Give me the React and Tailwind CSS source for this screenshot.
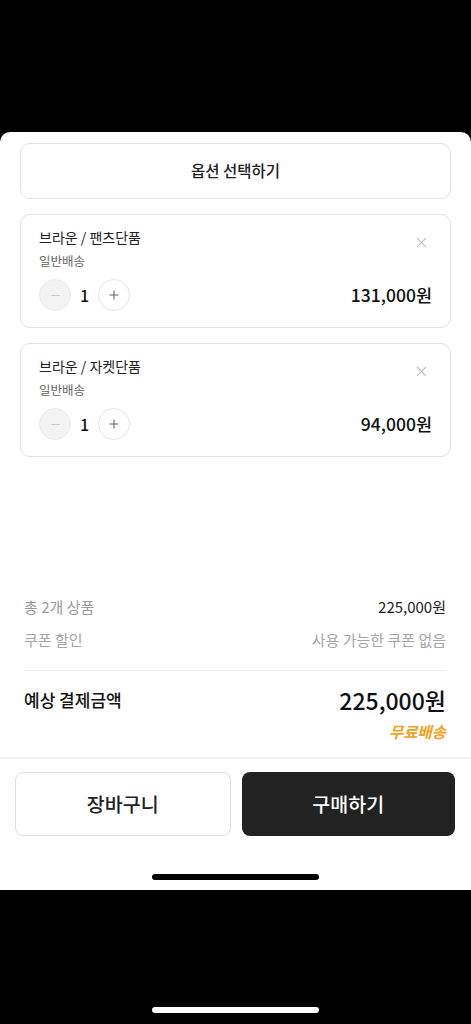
import { X, Minus, Plus } from "lucide-react";

const font = { fontFamily: '"Noto Sans CJK KR", "Noto Sans", sans-serif' };

function OptionCard({ name, price }) {
  return (
    <div className="relative h-[114px] rounded-[10px] border border-[#e2e2e2] bg-white pl-[18px] pr-[18px] pt-[12px]">
      <div className="text-[14px] leading-[20px] text-[#222]">{name}</div>
      <div className="mt-[5px] text-[12.5px] leading-[18px] text-[#666]">일반배송</div>
      <div className="mt-[9px] flex items-center justify-between">
        <div className="flex items-center">
          <div className="flex h-[32px] w-[32px] items-center justify-center rounded-full border border-[#ebebeb] bg-[#f3f3f3]">
            <Minus size={13} color="#c4c4c4" strokeWidth={1.6} />
          </div>
          <div className="w-[27px] text-center text-[16px] font-medium text-[#111]">1</div>
          <div className="flex h-[32px] w-[32px] items-center justify-center rounded-full border border-[#e6e6e6] bg-white">
            <Plus size={14} color="#555" strokeWidth={1.6} />
          </div>
        </div>
        <div className="text-[17.5px] font-medium text-[#111]">{price}</div>
      </div>
      <button className="absolute right-[20px] top-[19px]">
        <X size={17} color="#c4c4c4" strokeWidth={1.5} />
      </button>
    </div>
  );
}

export default function App() {
  return (
    <div className="flex h-[1024px] w-full flex-col bg-black" style={font}>
      <div className="h-[132px] shrink-0" />
      <div className="flex h-[758px] shrink-0 flex-col rounded-t-[10px] bg-white">
        <div className="flex flex-col gap-[15px] px-[20px] pt-[11px]">
          <button className="flex h-[56px] items-center justify-center rounded-[10px] border border-[#e2e2e2] bg-white text-[15.5px] font-medium text-[#222]">
            옵션 선택하기
          </button>
          <OptionCard name="브라운 / 팬츠단품" price="131,000원" />
          <OptionCard name="브라운 / 자켓단품" price="94,000원" />
        </div>
        <div className="flex-1" />
        <div className="pl-[24px] pr-[25px] pb-[16px]">
          <div className="flex items-center justify-between text-[15px] leading-[20px]">
            <span className="text-[#9a9a9a]">총 2개 상품</span>
            <span className="text-[#222]">225,000원</span>
          </div>
          <div className="mt-[13px] flex items-center justify-between text-[15px] leading-[20px]">
            <span className="text-[#a5a5a5]">쿠폰 할인</span>
            <span className="text-[#a5a5a5]">사용 가능한 쿠폰 없음</span>
          </div>
          <div className="mt-[20px] h-px bg-[#ececec]" />
          <div className="mt-[14px] flex items-center justify-between leading-[30px]">
            <span className="text-[17px] font-medium text-[#111]">예상 결제금액</span>
            <span className="text-[23px] font-medium text-[#111]">225,000원</span>
          </div>
          <div className="mt-[6px] text-right text-[15.5px] font-bold italic leading-[20px] text-[#f5a11c]">
            무료배송
          </div>
        </div>
        <div className="h-[2px] bg-[#f1f1f1]" />
        <div className="flex gap-[11px] pl-[15px] pr-[16px] pt-[13px]">
          <button className="flex h-[64px] flex-1 items-center justify-center rounded-[8px] border border-[#dedede] bg-white text-[19.5px] font-medium text-[#222]">
            장바구니
          </button>
          <button className="flex h-[64px] flex-1 items-center justify-center rounded-[8px] bg-[#222] text-[19.5px] font-medium text-white">
            구매하기
          </button>
        </div>
        <div className="flex h-[54px] shrink-0 items-end justify-center pb-[10px]">
          <div className="h-[6px] w-[167px] rounded-full bg-black" />
        </div>
      </div>
      <div className="flex flex-1 items-end justify-center pb-[11px]">
        <div className="h-[6px] w-[167px] rounded-full bg-white" />
      </div>
    </div>
  );
}
